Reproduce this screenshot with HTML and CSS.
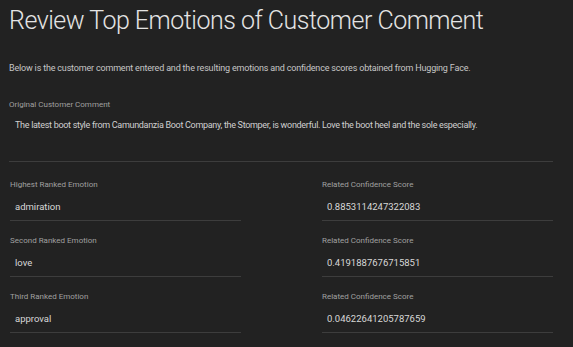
FILE: index.html
```html
<!DOCTYPE html>
<html lang="en">
<head>
    <meta charset="UTF-8">
    <title>Review Top Emotions of Customer Comment</title>
    <link rel="stylesheet" href="styles.css">
</head>
<body>
<div class="page">
    <h1 class="title">Review Top Emotions of Customer Comment</h1>
    <p class="intro">Below is the customer comment entered and the resulting emotions and confidence scores obtained from Hugging Face.</p>

    <div class="comment">
        <label class="field-label">Original Customer Comment</label>
        <div class="comment-text">The latest boot style from Camundanzia Boot Company, the Stomper, is wonderful. Love the boot heel and the sole especially.</div>
    </div>

    <hr class="divider">

    <div class="results">
        <div class="field">
            <label class="field-label">Highest Ranked Emotion</label>
            <div class="field-value">admiration</div>
        </div>
        <div class="field">
            <label class="field-label">Related Confidence Score</label>
            <div class="field-value">0.8853114247322083</div>
        </div>
        <div class="field">
            <label class="field-label">Second Ranked Emotion</label>
            <div class="field-value">love</div>
        </div>
        <div class="field">
            <label class="field-label">Related Confidence Score</label>
            <div class="field-value">0.4191887676715851</div>
        </div>
        <div class="field">
            <label class="field-label">Third Ranked Emotion</label>
            <div class="field-value">approval</div>
        </div>
        <div class="field">
            <label class="field-label">Related Confidence Score</label>
            <div class="field-value">0.04622641205787659</div>
        </div>
    </div>
</div>
</body>
</html>
```

FILE: styles.css
```css
body {
    margin: 0;
    background: #222222;
    font-family: Roboto, "Liberation Sans", sans-serif;
    color: #c6c6c6;
}
.page {
    padding: 4px 20px 20px 9px;
}
.title {
    margin: 0;
    font-size: 25px;
    font-weight: 300;
    letter-spacing: -0.5px;
    line-height: 34px;
    color: #e4e4e4;
}
.intro {
    margin: 23px 0 0 0;
    font-size: 9px;
    letter-spacing: -0.18px;
    line-height: 14px;
}
.comment {
    margin-top: 24px;
}
.field-label {
    display: block;
    font-size: 8px;
    line-height: 12px;
    color: #a0a0a0;
}
.comment-text {
    padding: 7px 6px 4px 6px;
    font-size: 9px;
    letter-spacing: -0.3px;
    line-height: 14px;
    color: #d0d0d0;
    white-space: nowrap;
}
.divider {
    margin: 25px 0 0 0;
    border: none;
    border-top: 1px solid #3d3d3d;
}
.results {
    display: grid;
    grid-template-columns: 1fr 1fr;
    column-gap: 81px;
    row-gap: 14px;
    padding: 17px 0 0 1px;
}
.field-value {
    margin-top: 3px;
    height: 26px;
    line-height: 26px;
    padding: 0 5px;
    font-size: 9.5px;
    color: #d8d8d8;
    border-bottom: 1px solid #3d3d3d;
}
```
